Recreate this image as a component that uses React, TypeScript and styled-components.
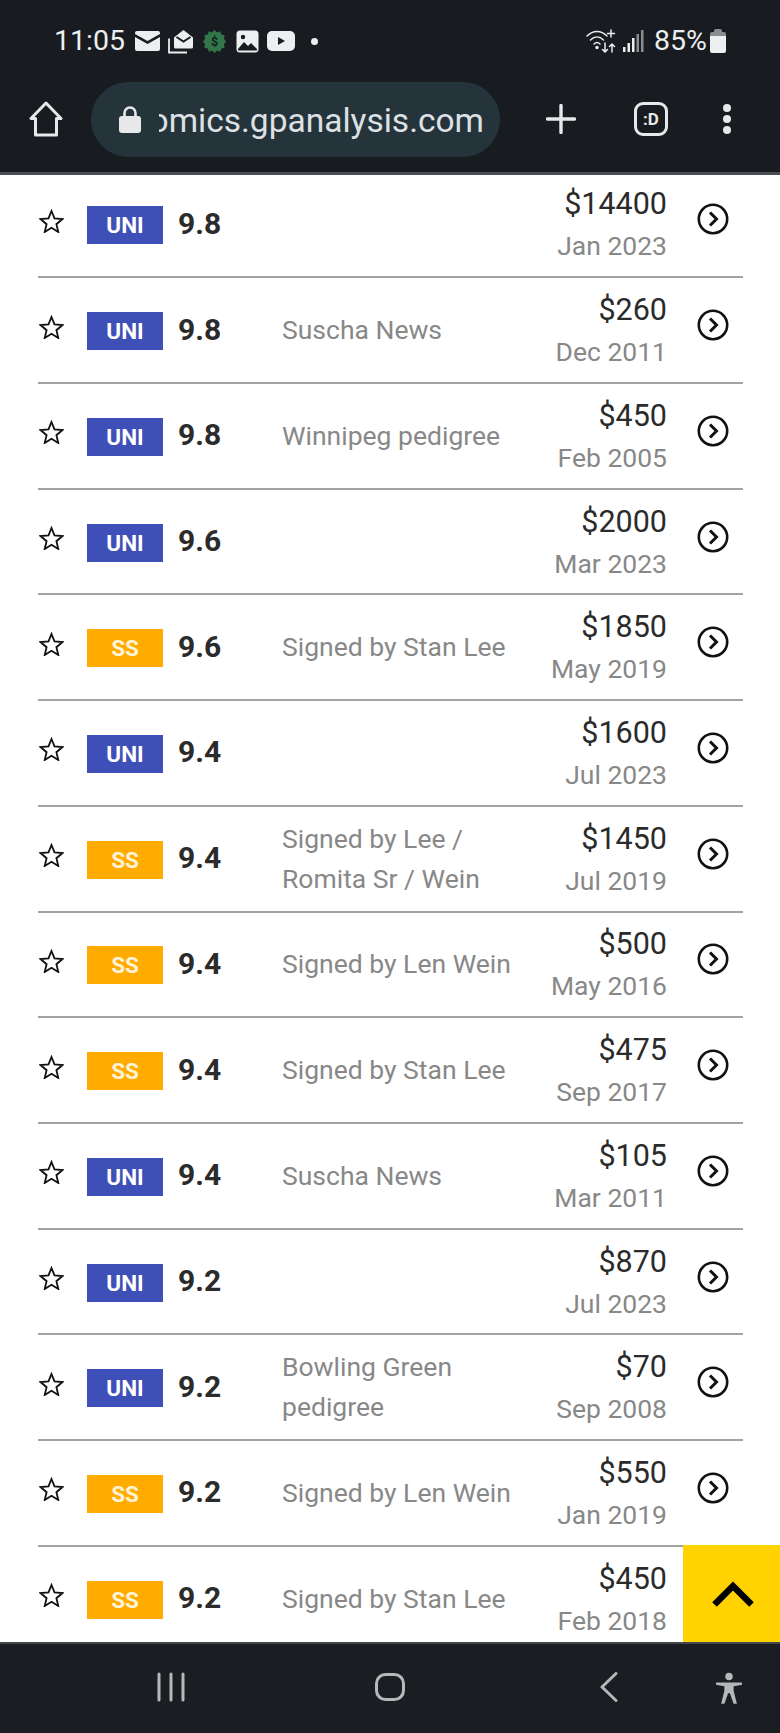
import React, { FC } from 'react';
import styled, { createGlobalStyle } from 'styled-components';

const GlobalStyle = createGlobalStyle`
  html, body {
    margin: 0;
    padding: 0;
    background: #181c20;
    font-family: Roboto, "Liberation Sans", sans-serif;
  }
  * { box-sizing: border-box; }
`;

const Screen = styled.div`
  width: 780px;
  height: 1733px;
  display: flex;
  flex-direction: column;
  overflow: hidden;
  background: #fff;
`;

const TopBar = styled.header`
  flex: 0 0 175px;
  background: #181c20;
  border-bottom: 3px solid #4a4e52;
`;

const StatusBar = styled.div`
  height: 78px;
  padding: 4px 54px 0 54px;
  display: flex;
  align-items: center;
  color: #eceeef;
`;

const StatusGroup = styled.div`
  display: flex;
  align-items: center;
`;

const StatusText = styled.span`
  font-size: 28.5px;
  line-height: 1;
`;

const BatteryText = styled(StatusText)`
  margin-left: 10px;
`;

const StatusDot = styled.span`
  width: 7px;
  height: 7px;
  margin-left: 16px;
  border-radius: 50%;
  background: #eceeef;
`;

const Spacer = styled.div`
  flex: 1;
`;

const Toolbar = styled.div`
  height: 82px;
  padding: 0 0 0 29px;
  display: flex;
  align-items: center;
`;

const UrlPill = styled.div`
  width: 409px;
  height: 75px;
  margin-left: 28px;
  padding: 0 16px 0 28px;
  border-radius: 38px;
  background: #25343b;
  display: flex;
  align-items: center;
`;

const UrlClip = styled.div`
  flex: 1;
  margin: 2px 0 0 18px;
  overflow: hidden;
  display: flex;
  justify-content: flex-end;
  white-space: nowrap;
  font-size: 33.5px;
  color: #dde1e4;
`;

const TabBox = styled.div`
  width: 34px;
  height: 34px;
  border: 3px solid #e6e8e9;
  border-radius: 9px;
  margin-left: 58px;
  display: flex;
  align-items: center;
  justify-content: center;
  color: #e6e8e9;
  font-size: 17px;
  font-weight: 700;
`;

const ListArea = styled.main`
  position: relative;
  flex: 1;
  min-height: 0;
  overflow: hidden;
`;

const List = styled.div`
  margin: -2.500px 37px 0 38px;
`;

const Row = styled.div`
  height: 105.72px;
  display: flex;
  align-items: center;
  border-bottom: 2px solid #a3a3a3;
`;

const StarCell = styled.div`
  flex: 0 0 49px;
  height: 24px;
  margin-bottom: 7px;
  padding-left: 1px;
  display: flex;
`;

const Badge = styled.div<{ $kind: string }>`
  flex: 0 0 76px;
  height: 38px;
  margin-top: 2px;
  display: flex;
  align-items: center;
  justify-content: center;
  background: ${p => (p.$kind === 'UNI' ? '#3f4fb8' : '#ffab00')};
  color: ${p => (p.$kind === 'UNI' ? '#fff' : '#fff3d6')};
  font-size: 22.5px;
  font-weight: 700;
`;

const Score = styled.div`
  flex: 0 0 119px;
  padding-left: 15px;
  margin-bottom: 2px;
  font-size: 30px;
  font-weight: 700;
  color: #2b2b2b;
`;

const Note = styled.div`
  flex: 0 0 240px;
  font-size: 26.5px;
  line-height: 40px;
  color: #888;
`;

const PriceCell = styled.div`
  flex: 1;
  text-align: right;
  white-space: nowrap;
`;

const Price = styled.div`
  font-size: 30.5px;
  line-height: 44px;
  color: #2b2b2b;
`;

const SaleDate = styled.div`
  font-size: 26.5px;
  line-height: 40px;
  color: #888;
`;

const ArrowCell = styled.div`
  flex: 0 0 76px;
  height: 32px;
  margin-bottom: 10px;
  padding-left: 30px;
  display: flex;
`;

const TopButton = styled.button`
  position: absolute;
  right: 0;
  bottom: 0;
  width: 97px;
  height: 97px;
  padding: 0 0 0 2px;
  border: 0;
  background: #ffd200;
  display: flex;
  align-items: center;
  justify-content: center;
`;

const NavBar = styled.nav`
  flex: 0 0 91px;
  background: #1a1d21;
  border-top: 2px solid #43474b;
  padding: 28px 0 0 157px;
  display: flex;
  align-items: flex-start;
`;

const NavSlot = styled.div<{ $gap: number }>`
  margin-left: ${p => p.$gap}px;
  display: flex;
`;

// status bar icons
const MailIcon: FC = () => (
  <svg width="25" height="20" viewBox="0 0 25 20" style={{ marginLeft: 10 }}>
    <path d="M2 0h21a2 2 0 0 1 2 2v1l-12.5 7L0 3V2a2 2 0 0 1 2-2z" fill="#eceeef" />
    <path d="M0 6l12.5 7L25 6v12a2 2 0 0 1-2 2H2a2 2 0 0 1-2-2z" fill="#eceeef" />
  </svg>
);

const OpenMailIcon: FC = () => (
  <svg width="25" height="25" viewBox="0 0 25 25" style={{ marginLeft: 8 }}>
    <path d="M6 8.500L15.500 1 25 8.500V18a1.500 1.500 0 0 1-1.500 1.500h-16A1.500 1.500 0 0 1 6 18z" fill="#eceeef" />
    <path d="M8.500 8l7 4.500 7-4.500" fill="none" stroke="#181c20" strokeWidth="2" />
    <path d="M1 9.500V23.500h18" fill="none" stroke="#eceeef" strokeWidth="1.800" />
  </svg>
);

const GreenBadgeIcon: FC = () => (
  <svg width="23" height="23" viewBox="0 0 22 22" style={{ marginLeft: 10 }}>
    <path
      d="M11 0l2.400 2.300 3.100-1 1 3.100 3.200.7-.7 3.200L22 11l-2 2.700.7 3.200-3.200.7-1 3.100-3.100-1L11 22l-2.400-2.300-3.100 1-1-3.100-3.200-.7.700-3.200L0 11l2-2.700-.7-3.200 3.200-.7 1-3.100 3.100 1z"
      fill="#33764a"
    />
    <text x="11" y="15.500" textAnchor="middle" fontSize="12" fontWeight="700" fill="#0f2416" fontFamily="Roboto">$</text>
  </svg>
);

const ImageIcon: FC = () => (
  <svg width="23" height="23" viewBox="0 0 23 23" style={{ marginLeft: 10 }}>
    <rect x="0.500" y="0.500" width="22" height="22" rx="3.500" fill="#eceeef" />
    <circle cx="7" cy="7" r="2.200" fill="#181c20" />
    <path d="M2 19l6-7 4 4 3-3 6 6v1.500H2z" fill="#181c20" />
  </svg>
);

const YoutubeIcon: FC = () => (
  <svg width="28" height="20" viewBox="0 0 28 20" style={{ marginLeft: 8 }}>
    <rect width="28" height="20" rx="5" fill="#eceeef" />
    <path d="M11 6l7 4-7 4z" fill="#181c20" />
  </svg>
);

const WifiIcon: FC = () => (
  <svg width="30" height="24" viewBox="0 0 30 24" fill="none" stroke="#eceeef" strokeWidth="1.500" strokeLinecap="round">
    <path d="M1 7c6-6 14-6 20 0" />
    <path d="M4.500 11c4-4 9-4 13 0" />
    <path d="M8 15c2-2 4-2 6 0" />
    <circle cx="11" cy="18.500" r="1" fill="#eceeef" />
    <path d="M25 1v7M21.500 4.500h7" />
    <path d="M19 14v9M16.500 20.500l2.500 2.500 2.500-2.500" />
    <path d="M26 23v-8M23.500 17.500l2.500-2.500 2.500 2.500" />
  </svg>
);

const SignalIcon: FC = () => (
  <svg width="21" height="22" viewBox="0 0 21 22" style={{ marginLeft: 7 }}>
    <rect x="0" y="17" width="2.500" height="5" fill="#eceeef" />
    <rect x="4.500" y="13" width="2.500" height="9" fill="#eceeef" />
    <rect x="9" y="8" width="2.500" height="14" fill="#eceeef" />
    <rect x="13.500" y="4" width="2.500" height="18" fill="#8a8d8f" />
    <rect x="18" y="0" width="2.500" height="22" fill="#8a8d8f" />
  </svg>
);

const BatteryIcon: FC = () => (
  <svg width="16" height="24" viewBox="0 0 16 24" style={{ marginLeft: 3 }}>
    <path d="M4 2a2 2 0 0 1 2-2h4a2 2 0 0 1 2 2v1h2a2 2 0 0 1 2 2v2H0V5a2 2 0 0 1 2-2h2z" fill="#8a8d8f" />
    <path d="M0 7h16v15a2 2 0 0 1-2 2H2a2 2 0 0 1-2-2z" fill="#eceeef" />
  </svg>
);

// browser toolbar icons
const HomeIcon: FC = () => (
  <svg width="34" height="36" viewBox="0 0 34 36" fill="none" stroke="#e6e8e9" strokeWidth="3" strokeLinejoin="round">
    <path d="M17 2L2 17.500h4.500V34h21V17.500H32z" />
  </svg>
);

const LockIcon: FC = () => (
  <svg width="22" height="27" viewBox="0 0 22 27" style={{ flexShrink: 0 }}>
    <path d="M5.500 11V7a5.500 5.500 0 0 1 11 0v4" fill="none" stroke="#e6e8e9" strokeWidth="2.600" />
    <rect y="10" width="22" height="17" rx="3" fill="#e6e8e9" />
  </svg>
);

const PlusIcon: FC = () => (
  <svg width="30" height="30" viewBox="0 0 30 30" stroke="#e6e8e9" strokeWidth="3.400" strokeLinecap="round" style={{ marginLeft: 46 }}>
    <path d="M15 1.500v27M1.500 15h27" />
  </svg>
);

const DotsIcon: FC = () => (
  <svg width="8" height="30" viewBox="0 0 8 30" fill="#e6e8e9" style={{ marginLeft: 55 }}>
    <circle cx="4" cy="4" r="4" />
    <circle cx="4" cy="15" r="4" />
    <circle cx="4" cy="26" r="4" />
  </svg>
);

// list icons
const StarIcon: FC = () => (
  <svg width="25" height="24" viewBox="0 0 25 24" fill="none" stroke="#111" strokeWidth="1.800" strokeLinejoin="miter">
    <path d="M12.500 2l3 7.400 8 .6-6.100 5.200 1.900 7.800-6.800-4.200-6.800 4.200 1.900-7.800L1.500 10l8-.6z" />
  </svg>
);

const ArrowCircleIcon: FC = () => (
  <svg width="32" height="32" viewBox="0 0 32 32" fill="none" stroke="#111" strokeWidth="2.600">
    <circle cx="16" cy="16" r="14.200" />
    <path d="M13 9.500l6.500 6.500-6.500 6.500" strokeWidth="3" />
  </svg>
);

const ChevronUpIcon: FC = () => (
  <svg width="42" height="26" viewBox="0 0 42 26" fill="none" stroke="#000" strokeWidth="6.500">
    <path d="M2.500 23.500L21 5l18.500 18.500" />
  </svg>
);

// system navigation icons
const RecentsIcon: FC = () => (
  <svg width="28" height="30" viewBox="0 0 28 30" stroke="#b5b7b8" strokeWidth="3" strokeLinecap="round">
    <path d="M2 2v26M14 2v26M26 2v26" />
  </svg>
);

const HomeSquareIcon: FC = () => (
  <svg width="30" height="30" viewBox="0 0 30 30" fill="none" stroke="#b5b7b8" strokeWidth="3">
    <rect x="1.500" y="2.500" width="27" height="25" rx="9" />
  </svg>
);

const BackIcon: FC = () => (
  <svg width="18" height="30" viewBox="0 0 18 30" fill="none" stroke="#b5b7b8" strokeWidth="3" strokeLinecap="round" strokeLinejoin="round">
    <path d="M16 1.500L2 15l14 13.500" />
  </svg>
);

const AccessibilityIcon: FC = () => (
  <svg width="26" height="33" viewBox="0 0 28 34" fill="#b5b7b8">
    <circle cx="14" cy="4" r="4" />
    <path d="M1 10.500h26a1.300 1.300 0 0 1 0 2.600l-8 1.400v5l3.500 14h-3.600L15 22h-2l-3.900 11.500H5.500L9 19.500v-5l-8-1.400a1.300 1.300 0 0 1 0-2.600z" />
  </svg>
);

type Sale = {
  kind: 'UNI' | 'SS',
  grade: string,
  note?: string,
  price: string,
  date: string
};

const sales: Sale[] = [
  { kind: 'UNI', grade: '9.8', price: '$14400', date: 'Jan 2023' },
  { kind: 'UNI', grade: '9.8', note: 'Suscha News', price: '$260', date: 'Dec 2011' },
  { kind: 'UNI', grade: '9.8', note: 'Winnipeg pedigree', price: '$450', date: 'Feb 2005' },
  { kind: 'UNI', grade: '9.6', price: '$2000', date: 'Mar 2023' },
  { kind: 'SS', grade: '9.6', note: 'Signed by Stan Lee', price: '$1850', date: 'May 2019' },
  { kind: 'UNI', grade: '9.4', price: '$1600', date: 'Jul 2023' },
  { kind: 'SS', grade: '9.4', note: 'Signed by Lee / Romita Sr / Wein', price: '$1450', date: 'Jul 2019' },
  { kind: 'SS', grade: '9.4', note: 'Signed by Len Wein', price: '$500', date: 'May 2016' },
  { kind: 'SS', grade: '9.4', note: 'Signed by Stan Lee', price: '$475', date: 'Sep 2017' },
  { kind: 'UNI', grade: '9.4', note: 'Suscha News', price: '$105', date: 'Mar 2011' },
  { kind: 'UNI', grade: '9.2', price: '$870', date: 'Jul 2023' },
  { kind: 'UNI', grade: '9.2', note: 'Bowling Green pedigree', price: '$70', date: 'Sep 2008' },
  { kind: 'SS', grade: '9.2', note: 'Signed by Len Wein', price: '$550', date: 'Jan 2019' },
  { kind: 'SS', grade: '9.2', note: 'Signed by Stan Lee', price: '$450', date: 'Feb 2018' }
];

const App: FC = () => (
  <Screen>
    <GlobalStyle />
    <TopBar>
      <StatusBar>
        <StatusGroup>
          <StatusText>11:05</StatusText>
          <MailIcon />
          <OpenMailIcon />
          <GreenBadgeIcon />
          <ImageIcon />
          <YoutubeIcon />
          <StatusDot />
        </StatusGroup>
        <Spacer />
        <StatusGroup>
          <WifiIcon />
          <SignalIcon />
          <BatteryText>85%</BatteryText>
          <BatteryIcon />
        </StatusGroup>
      </StatusBar>
      <Toolbar>
        <HomeIcon />
        <UrlPill>
          <LockIcon />
          <UrlClip>comics.gpanalysis.com</UrlClip>
        </UrlPill>
        <PlusIcon />
        <TabBox>:D</TabBox>
        <DotsIcon />
      </Toolbar>
    </TopBar>
    <ListArea>
      <List>
        {sales.map((sale, i) => (
          <Row key={i}>
            <StarCell><StarIcon /></StarCell>
            <Badge $kind={sale.kind}>{sale.kind}</Badge>
            <Score>{sale.grade}</Score>
            <Note>{sale.note}</Note>
            <PriceCell>
              <Price>{sale.price}</Price>
              <SaleDate>{sale.date}</SaleDate>
            </PriceCell>
            <ArrowCell><ArrowCircleIcon /></ArrowCell>
          </Row>
        ))}
      </List>
      <TopButton><ChevronUpIcon /></TopButton>
    </ListArea>
    <NavBar>
      <NavSlot $gap={0}><RecentsIcon /></NavSlot>
      <NavSlot $gap={190}><HomeSquareIcon /></NavSlot>
      <NavSlot $gap={195}><BackIcon /></NavSlot>
      <NavSlot $gap={98}><AccessibilityIcon /></NavSlot>
    </NavBar>
  </Screen>
);

export default App;
